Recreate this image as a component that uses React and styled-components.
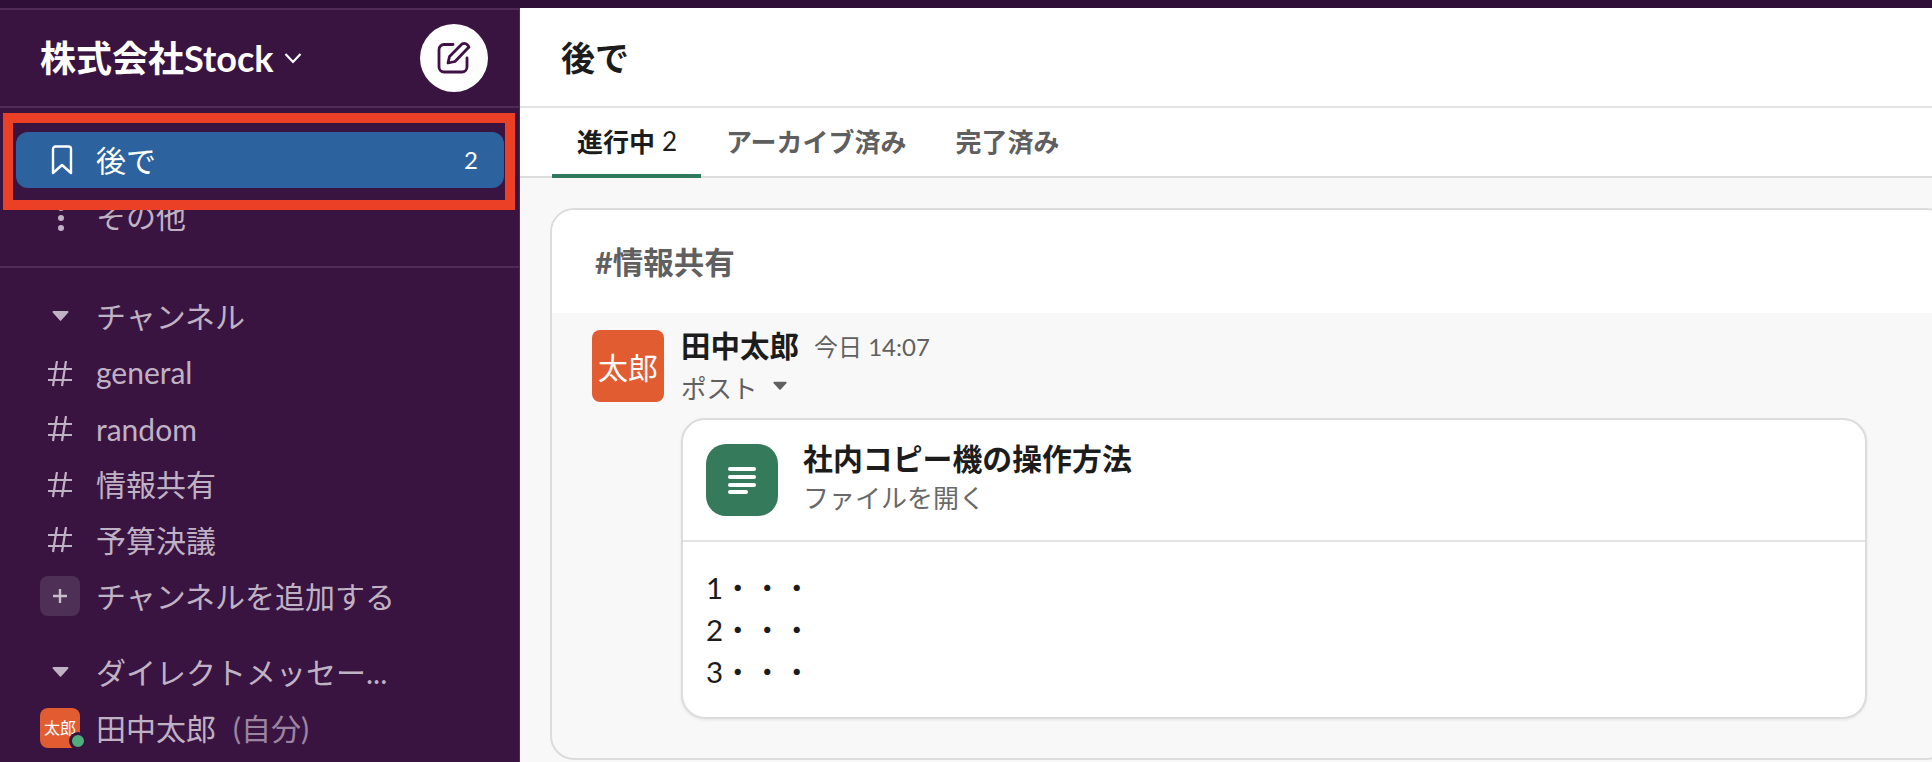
import styled, { createGlobalStyle } from 'styled-components'

const GlobalStyle = createGlobalStyle`
  html, body {
    margin: 0;
    padding: 0;
    background: #fff;
  }
  * {
    box-sizing: border-box;
  }
`

const Page = styled.div`
  width: 1932px;
  height: 762px;
  overflow: hidden;
  display: flex;
  flex-direction: column;
  background: #2f0f37;
  font-family: Lato, 'Noto Sans CJK JP', sans-serif;
`

const TopStrip = styled.div`
  height: 8px;
  flex: none;
  background: #2f0f37;
`

const Body = styled.div`
  flex: 1;
  min-height: 0;
  display: flex;
`

const Sidebar = styled.aside`
  position: relative;
  flex: none;
  width: 520px;
  background: #3a1440;
  border-top: 2px solid #4e2c55;
  border-right: 1px solid #4e2c55;
  color: #c0b2c5;
`

const Workspace = styled.header`
  height: 98px;
  display: flex;
  align-items: center;
  justify-content: space-between;
  padding: 0 31px 0 40px;
  border-bottom: 2px solid #4e2c55;
`

const WorkspaceName = styled.div`
  display: flex;
  align-items: center;
  gap: 11px;
  color: #fff;
  font-size: 36px;
  font-weight: 700;
  line-height: 44px;
`

const ComposeButton = styled.button`
  width: 68px;
  height: 68px;
  padding: 0;
  border: 0;
  border-radius: 50%;
  display: flex;
  align-items: center;
  justify-content: center;
  background: #fff;
  color: #3f1145;
`

const Section = styled.nav`
  display: flex;
  flex-direction: column;
  padding: ${p => p.$pad || '0'};
  border-bottom: ${p => (p.$divider ? '2px solid #4e2c55' : '0')};
`

const Row = styled.div`
  flex: none;
  height: ${p => (p.$tall ? '56px' : '55.5px')};
  margin: ${p => p.$margin || '0'} 15px 0 16px;
  padding: 0 24px;
  display: flex;
  align-items: center;
  gap: 16px;
  border-radius: 12px;
  font-size: 30px;
  line-height: 40px;
  background: ${p => (p.$active ? '#2c639e' : 'transparent')};
  color: ${p => (p.$active ? '#fff' : 'inherit')};
`

const RowLabel = styled.span`
  position: relative;
  top: ${p => p.$shift || '0'};
`

const IconSlot = styled.span`
  position: relative;
  flex: none;
  width: 40px;
  height: 40px;
  display: flex;
  align-items: center;
  justify-content: center;
  svg {
    margin-left: ${p => p.$nudge || '0'};
  }
`

const PlusBox = styled(IconSlot)`
  border-radius: 8px;
  background: #4e2f56;
`

const SmallAvatar = styled(IconSlot)`
  border-radius: 8px;
  background: #e25c32;
  color: #fff;
  font-size: 16px;
  line-height: 1;
  white-space: nowrap;
`

const StatusDot = styled.span`
  position: absolute;
  right: -7px;
  bottom: -2px;
  width: 18px;
  height: 18px;
  border-radius: 50%;
  background: #4fae7b;
  border: 3px solid #3a1440;
`

const Count = styled.span`
  margin-left: auto;
  margin-right: 2px;
  font-size: 24px;
`

const Muted = styled.span`
  margin-left: 17px;
  color: #9b85a1;
`

const Highlight = styled.div`
  position: absolute;
  left: 3px;
  top: 103px;
  width: 512px;
  height: 97px;
  border: 10px solid #eb3f26;
  pointer-events: none;
`

const Main = styled.main`
  flex: 1;
  min-width: 0;
  display: flex;
  flex-direction: column;
  background: #f8f8f8;
  color: #1d1c1d;
`

const PageHead = styled.header`
  height: 100px;
  flex: none;
  padding: 0 0 2px 41px;
  display: flex;
  align-items: center;
  background: #fff;
  border-bottom: 2px solid #e2e2e2;
  font-size: 34px;
  font-weight: 700;
`

const Tabs = styled.div`
  height: 70px;
  flex: none;
  padding-left: 32px;
  display: flex;
  background: #fff;
  border-bottom: 2px solid #dcdcdc;
`

const Tab = styled.div`
  height: 70px;
  padding: 0 24px 1px 25px;
  display: flex;
  align-items: center;
  gap: 7px;
  font-size: 26px;
  font-weight: 700;
  color: ${p => (p.$active ? '#1d1c1d' : '#5f5f5f')};
  border-bottom: 4px solid ${p => (p.$active ? '#2f7a5c' : 'transparent')};
`

const TabCount = styled.span`
  font-weight: 400;
`

const Content = styled.div`
  flex: 1;
  min-height: 0;
  padding: 30px 0 0 30px;
`

const Group = styled.section`
  width: 1400px;
  height: 552px;
  border: 2px solid #dcdcdc;
  border-radius: 24px;
  overflow: hidden;
  background: #f8f8f8;
`

const GroupTitle = styled.h2`
  margin: 0;
  height: 103px;
  padding: 0 0 2px 43px;
  display: flex;
  align-items: center;
  background: #fff;
  color: #616061;
  font-size: 30.5px;
  font-weight: 700;
`

const Message = styled.article`
  padding: 17px 0 0 40px;
  display: flex;
  gap: 17px;
`

const Avatar = styled.div`
  flex: none;
  width: 72px;
  height: 72px;
  border-radius: 8px;
  display: flex;
  align-items: center;
  justify-content: center;
  background: #e25c32;
  color: #fff;
  font-size: 30px;
  white-space: nowrap;
`

const MessageBody = styled.div`
  display: flex;
  flex-direction: column;
`

const NameLine = styled.div`
  height: 28px;
  display: flex;
  align-items: center;
  gap: 15px;
`

const Name = styled.strong`
  font-size: 29.5px;
  font-weight: 700;
`

const Time = styled.span`
  margin-top: 2px;
  font-size: 24px;
  color: #616061;
`

const PostLine = styled.div`
  height: 40px;
  margin-top: 8px;
  display: flex;
  align-items: center;
  gap: 15px;
  color: #616061;
  font-size: 25.5px;
`

const PostCard = styled.div`
  width: 1186px;
  height: 301px;
  margin: 12px 0 0;
  border: 2px solid #dcdcdc;
  border-radius: 24px;
  background: #fff;
  box-shadow: 0 1px 3px rgba(0, 0, 0, 0.08);
  overflow: hidden;
`

const PostHead = styled.div`
  height: 122px;
  padding: 24px 0 0 23px;
  display: flex;
  align-items: flex-start;
  gap: 25px;
  border-bottom: 2px solid #e2e2e2;
`

const FileIcon = styled.div`
  flex: none;
  width: 72px;
  height: 72px;
  border-radius: 20px;
  display: flex;
  align-items: center;
  justify-content: center;
  background: #357a5b;
`

const FileText = styled.div`
  display: flex;
  flex-direction: column;
  margin-top: -1px;
`

const FileTitle = styled.div`
  height: 30px;
  line-height: 30px;
  font-size: 29.9px;
  font-weight: 700;
`

const FileLink = styled.div`
  margin-top: 11px;
  height: 28px;
  line-height: 28px;
  font-size: 26px;
  color: #696969;
`

const PostText = styled.div`
  padding: 25px 0 0 23px;
  font-size: 29.5px;
  line-height: 42px;
`

const Caret = ({ size = 17, color = '#c0b2c5' }) => (
  <svg width={size} height={size * 0.65} viewBox="0 0 17 11">
    <path d="M1.5 1h14a1 1 0 0 1 .8 1.6l-7 7.6a1 1 0 0 1-1.6 0l-7-7.6A1 1 0 0 1 1.5 1z" fill={color} />
  </svg>
)

const HashIcon = () => (
  <svg width="26" height="26" viewBox="0 0 26 26" fill="none" stroke="#c0b2c5" strokeWidth="2.2">
    <path d="M10 0 6 25M19 0l-4 25M1 8h24M1 19h24" />
  </svg>
)

const BookmarkIcon = () => (
  <svg width="22" height="30" viewBox="0 0 22 30" fill="none" stroke="#fff" strokeWidth="2.4" strokeLinejoin="round">
    <path d="M2 4a2.5 2.5 0 0 1 2.5-2.5h13A2.5 2.5 0 0 1 20 4v24l-9-8-9 8z" />
  </svg>
)

const ComposeIcon = () => (
  <svg width="34" height="34" viewBox="0 0 34 34" fill="none" stroke="currentColor" strokeWidth="2.8" strokeLinecap="round" strokeLinejoin="round">
    <path d="M16 3.5H7a5 5 0 0 0-5 5V26a5 5 0 0 0 5 5h18a5 5 0 0 0 5-5V17" />
    <path d="M11 22l1.5-6.5L25 3q3-1.5 5.5 1t.5 3L18 20.5z" />
  </svg>
)

const MoreIcon = () => (
  <svg width="8" height="28" viewBox="0 0 8 28" fill="#c0b2c5">
    <circle cx="4" cy="4" r="3" />
    <circle cx="4" cy="14" r="3" />
    <circle cx="4" cy="24" r="3" />
  </svg>
)

const PlusIcon = () => (
  <svg width="16" height="16" viewBox="0 0 16 16" stroke="#c9bdcd" strokeWidth="2.4">
    <path d="M8 1v14M1 8h14" />
  </svg>
)

const LinesIcon = () => (
  <svg width="28" height="28" viewBox="0 0 28 28" fill="#fff">
    <rect x="0" y="1" width="28" height="4" rx="2" />
    <rect x="0" y="9" width="28" height="4" rx="2" />
    <rect x="0" y="17" width="28" height="4" rx="2" />
    <rect x="0" y="24" width="20" height="4" rx="2" />
  </svg>
)

const channels = [
  { name: 'general', shift: '-2px' },
  { name: 'random', shift: '0' },
  { name: '情報共有', shift: '-1px' },
  { name: '予算決議', shift: '0' },
]

const App = () => (
  <>
    <GlobalStyle />
    <Page>
      <TopStrip />
      <Body>
        <Sidebar>
          <Workspace>
            <WorkspaceName>
              株式会社Stock
              <svg width="18" height="12" viewBox="0 0 18 12" fill="none" stroke="#fff" strokeWidth="2.2">
                <path d="M1.5 2 9 10l7.5-8" />
              </svg>
            </WorkspaceName>
            <ComposeButton>
              <ComposeIcon />
            </ComposeButton>
          </Workspace>

          <Section $divider $pad="24px 0 20px">
            <Row $active $tall>
              <IconSlot $nudge="4px">
                <BookmarkIcon />
              </IconSlot>
              <RowLabel>後で</RowLabel>
              <Count>2</Count>
            </Row>
            <Row $tall $margin="2px">
              <IconSlot $nudge="2px">
                <MoreIcon />
              </IconSlot>
              <RowLabel $shift="-2px">その他</RowLabel>
            </Row>
          </Section>

          <Section $pad="20px 0 0">
            <Row $tall>
              <IconSlot>
                <Caret />
              </IconSlot>
              チャンネル
            </Row>
            {channels.map((channel, i) => (
              <Row key={channel.name} $margin={i === 0 ? '2px' : '0'}>
                <IconSlot>
                  <HashIcon />
                </IconSlot>
                <RowLabel $shift={channel.shift}>{channel.name}</RowLabel>
              </Row>
            ))}
            <Row>
              <PlusBox>
                <PlusIcon />
              </PlusBox>
              チャンネルを追加する
            </Row>
            <Row $tall $margin="20px">
              <IconSlot>
                <Caret />
              </IconSlot>
              ダイレクトメッセー...
            </Row>
            <Row $tall>
              <SmallAvatar>
                太郎
                <StatusDot />
              </SmallAvatar>
              <span>
                田中太郎
                <Muted>(自分)</Muted>
              </span>
            </Row>
          </Section>
          <Highlight />
        </Sidebar>

        <Main>
          <PageHead>後で</PageHead>
          <Tabs>
            <Tab $active>
              進行中
              <TabCount>2</TabCount>
            </Tab>
            <Tab>アーカイブ済み</Tab>
            <Tab>完了済み</Tab>
          </Tabs>
          <Content>
            <Group>
              <GroupTitle>#情報共有</GroupTitle>
              <Message>
                <Avatar>太郎</Avatar>
                <MessageBody>
                  <NameLine>
                    <Name>田中太郎</Name>
                    <Time>今日 14:07</Time>
                  </NameLine>
                  <PostLine>
                    ポスト
                    <Caret size={14} color="#616061" />
                  </PostLine>
                  <PostCard>
                    <PostHead>
                      <FileIcon>
                        <LinesIcon />
                      </FileIcon>
                      <FileText>
                        <FileTitle>社内コピー機の操作方法</FileTitle>
                        <FileLink>ファイルを開く</FileLink>
                      </FileText>
                    </PostHead>
                    <PostText>
                      <div>1・・・</div>
                      <div>2・・・</div>
                      <div>3・・・</div>
                    </PostText>
                  </PostCard>
                </MessageBody>
              </Message>
            </Group>
          </Content>
        </Main>
      </Body>
    </Page>
  </>
)

export default App
